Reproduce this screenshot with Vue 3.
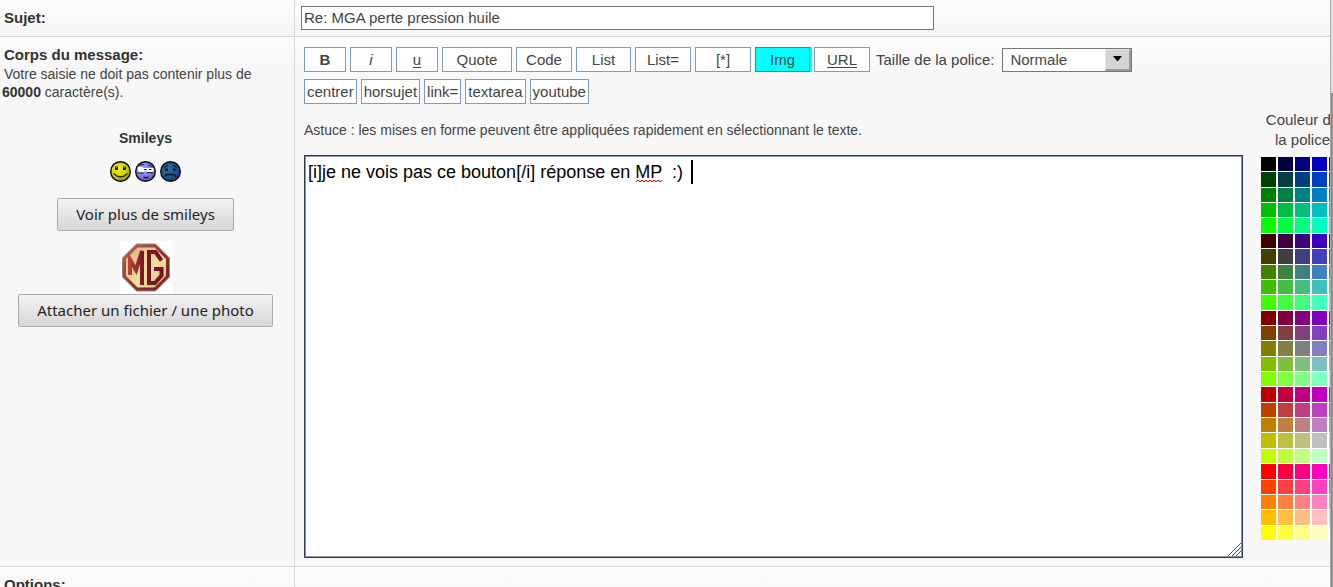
<template>
  <form class="post-form" @submit.prevent>
    <div class="form-rows">
      <!-- Sujet -->
      <div class="cell label-cell subject-label">
        <label class="row-title" for="subject">Sujet:</label>
      </div>
      <div class="cell subject-cell">
        <input id="subject" v-model="subject" class="subject-input" type="text" />
      </div>

      <!-- Corps du message -->
      <div class="cell label-cell body-label">
        <label class="row-title" for="message">Corps du message:</label>
        <p class="limit">
          <span class="limit-intro">Votre saisie ne doit pas contenir plus de</span>
          <b>60000</b> caractère(s).
        </p>

        <div class="tools">
          <h2 class="tools-title">Smileys</h2>
          <div class="smileys">
            <button
              v-for="smiley in smileys"
              :key="smiley.code"
              class="smiley"
              type="button"
              :aria-label="smiley.name"
              @click="insert(smiley.code)"
            >
              <svg viewBox="0 0 21 21" width="21" height="21">
                <defs>
                  <radialGradient :id="'face-' + smiley.name" cx="0.4" cy="0.35" r="0.7">
                    <stop offset="0" :stop-color="smiley.light" />
                    <stop offset="0.6" :stop-color="smiley.base" />
                    <stop offset="1" :stop-color="smiley.dark" />
                  </radialGradient>
                </defs>
                <circle cx="10.5" cy="10.5" r="9.8" :fill="`url(#face-${smiley.name})`" stroke="#0a0a12" stroke-width="1.4" />
                <g v-if="smiley.name === 'sourire'">
                  <path d="M5 5.5h3v3.500H5zM13 5.500h3v3.500h-3z" fill="#161600" />
                  <path d="M6 6h1v1H6zM14 6h1v1h-1z" fill="#8f8f20" />
                  <path d="M3.500 12.500l1.500 1C7 16.500 14 16.500 16 13.500l1.500-1" fill="none" stroke="#222000" stroke-width="1.3" />
                </g>
                <g v-else-if="smiley.name === 'cool'">
                  <path d="M3 4.500l6-1M13 4l5 1.500" stroke="#22224a" stroke-width="1" />
                  <path d="M2.500 6.500q3.500-1.500 6.500.5h9.500v4H12l-2-1.500-1 2H4.500L3 10z" fill="#fff" />
                  <path d="M9 8.500h2.500M14 8.500h2.500M12 11.500h6M3 12h6" stroke="#17172e" stroke-width="1.100" />
                  <path d="M8.500 16.500h5" stroke="#17172e" stroke-width="1.500" />
                </g>
                <g v-else>
                  <path d="M4 6.500l4-2M13 4.500l4 2" stroke="#07182c" stroke-width="1.200" />
                  <path d="M5.500 7.500h2.500v2.500H5.500zM13 7.500h2.500v2.500H13z" fill="#051326" />
                  <path d="M5 15.500l2-2h7l2 2" fill="none" stroke="#07182c" stroke-width="1.400" />
                </g>
              </svg>
            </button>
          </div>
          <button class="soft-button" type="button">Voir plus de smileys</button>
          <svg class="logo" viewBox="0 0 52 53" width="52" height="53" role="img" aria-label="MG">
            <defs>
              <linearGradient id="badge-red" x1="0" y1="0" x2="1" y2="1">
                <stop offset="0" stop-color="#c4665a" />
                <stop offset="0.5" stop-color="#8e3436" />
                <stop offset="1" stop-color="#742022" />
              </linearGradient>
              <linearGradient id="badge-cream" x1="0" y1="0" x2="1" y2="1">
                <stop offset="0" stop-color="#dcb57c" />
                <stop offset="0.6" stop-color="#f0dfa4" />
                <stop offset="1" stop-color="#d3b273" />
              </linearGradient>
              <linearGradient id="badge-mark" gradientUnits="userSpaceOnUse" x1="8" y1="0" x2="44" y2="0">
                <stop offset="0" stop-color="#c4453c" />
                <stop offset="0.4" stop-color="#7c1820" />
                <stop offset="1" stop-color="#74161e" />
              </linearGradient>
            </defs>
            <path d="M0 0h52v53H0z" fill="#fff" />
            <path d="M16.500 3h19L49.500 17v19L35.500 50h-19L2.500 36V17z" fill="url(#badge-red)" stroke="#a08078" stroke-width="1" />
            <path d="M17.500 6.500h17L46 18v17L34.500 46.500h-17L6 35V18z" fill="url(#badge-cream)" />
            <g fill="none" stroke="url(#badge-mark)" stroke-width="4">
              <path d="M10 34V18.500L16 29l6-19v34" />
              <path d="M41.500 19.500L35.500 11H29v31h6l6.500-7.500V28H34" />
            </g>
          </svg>
          <button class="soft-button" type="button">Attacher un fichier / une photo</button>
        </div>
      </div>

      <div class="cell editor-cell">
        <div class="toolbar">
          <button
            v-for="tag in tags"
            :key="tag.label"
            class="tag"
            :class="[tag.kind, { active: tag.label === 'Img' }]"
            type="button"
            @click="insert(tag.code)"
          >{{ tag.label }}</button>
          <label class="size-label" for="font-size">Taille de la police:</label>
          <span class="size-box">
            <select id="font-size" v-model="fontSize" class="size-select">
              <option>Très petite</option>
              <option>Petite</option>
              <option>Normale</option>
              <option>Grande</option>
              <option>Très grande</option>
            </select>
            <span class="size-arrow">
              <svg viewBox="0 0 9 6" width="9" height="6"><path d="M0 0h9L4.500 5.500z" fill="#000" /></svg>
            </span>
          </span>
        </div>
        <div class="toolbar extra">
          <button v-for="tag in extraTags" :key="tag" class="tag fit" type="button" @click="insert(`[${tag}]`)">{{ tag }}</button>
        </div>
        <p class="hint">Astuce : les mises en forme peuvent être appliquées rapidement en sélectionnant le texte.</p>

        <div class="writing">
          <div class="message-box">
            <textarea id="message" v-model="message" class="message" spellcheck="false"></textarea>
            <svg class="squiggle" viewBox="0 0 27 4" width="27" height="4">
              <path d="M0 3l2-2 2 2 2-2 2 2 2-2 2 2 2-2 2 2 2-2 2 2 2-2 2 2 2-2" fill="none" stroke="#f00" stroke-width="1" />
            </svg>
            <span class="caret"></span>
            <svg class="grip" viewBox="0 0 13 13" width="13" height="13">
              <path d="M0 13L13 0M4 13l9-9M8 13l5-5" stroke="#555" stroke-width="1" />
            </svg>
          </div>
          <div class="colours">
            <p class="colours-title">Couleur de la police</p>
            <div class="palette">
              <button
                v-for="colour in palette"
                :key="colour"
                class="swatch"
                type="button"
                :aria-label="colour"
                :style="{ backgroundColor: colour }"
                @click="insert(`[color=${colour}]`)"
              ></button>
            </div>
          </div>
        </div>
      </div>

      <!-- Options -->
      <div class="cell label-cell options-label">
        <span class="row-title">Options:</span>
      </div>
      <div class="cell options-cell"></div>
    </div>
    <div class="scroll-track"><div class="scroll-thumb"></div></div>
  </form>
</template>

<script setup>
import { ref } from 'vue';

const subject = ref('Re: MGA perte pression huile');
const message = ref('[i]je ne vois pas ce bouton[/i] réponse en MP  :) ');
const fontSize = ref('Normale');

const smileys = [
  { name: 'sourire', code: ':)', light: '#f0f020', base: '#d0d000', dark: '#858500' },
  { name: 'cool', code: '8)', light: '#9a9cf6', base: '#7b7de0', dark: '#5557a6' },
  { name: 'triste', code: ':(', light: '#2b6aa8', base: '#1f568f', dark: '#143c69' },
];

const tags = [
  { label: 'B', code: '[b][/b]', kind: 'short bold' },
  { label: 'i', code: '[i][/i]', kind: 'short italic' },
  { label: 'u', code: '[u][/u]', kind: 'short underline' },
  { label: 'Quote', code: '[quote][/quote]', kind: 'wide' },
  { label: 'Code', code: '[code][/code]', kind: '' },
  { label: 'List', code: '[list][/list]', kind: 'narrow' },
  { label: 'List=', code: '[list=][/list]', kind: '' },
  { label: '[*]', code: '[*]', kind: '' },
  { label: 'Img', code: '[img][/img]', kind: 'narrow' },
  { label: 'URL', code: '[url][/url]', kind: 'underline' },
];

const extraTags = ['centrer', 'horsujet', 'link=', 'textarea', 'youtube'];

// rouge par blocs de cinq lignes, vert par ligne, bleu par colonne
const levels = ['00', '40', '80', 'BF', 'FF'];
const palette = levels.flatMap((r) => levels.flatMap((g) => levels.map((b) => `#${r}${g}${b}`)));

const insert = (text) => {
  message.value += text;
};
</script>

<style>
body {
  background: #f7f7f7;
}
</style>

<style scoped>
.post-form {
  display: flex;
  height: 100vh;
  overflow: hidden;
  font-family: 'Liberation Sans', Arial, sans-serif;
  font-size: 15px;
  color: #444;
}

.post-form * {
  box-sizing: border-box;
}

button,
input,
select,
textarea {
  font: inherit;
  color: inherit;
  margin: 0;
}

p,
h2 {
  margin: 0;
}

.form-rows {
  flex: 1;
  min-width: 0;
  display: grid;
  grid-template-columns: 295px minmax(0, 1fr);
  grid-auto-rows: max-content;
  align-content: start;
  overflow: hidden;
}

.cell {
  border-bottom: 1px solid #d5d5d5;
  background: linear-gradient(#fdfdfd, #f7f7f7 30px);
}

.label-cell {
  border-right: 1px solid #d9d9d9;
  padding: 8px 7px 8px 4px;
}

.row-title {
  display: block;
  line-height: 20px;
  font-weight: bold;
  color: #333;
}

.subject-cell {
  padding: 6px;
}

.subject-input {
  display: block;
  width: 633px;
  max-width: 100%;
  height: 24px;
  padding: 0 2px 2px;
  border: 1px solid #777;
  background: #fff;
}

.limit {
  font-size: 14px;
  line-height: 18px;
  margin-left: -2px;
}

.limit-intro {
  display: block;
  padding-left: 2px;
}

.limit b {
  color: #333;
}

.tools {
  display: flex;
  flex-direction: column;
  align-items: center;
  padding-top: 28px;
}

.tools-title {
  font-size: 14px;
  line-height: 18px;
  color: #333;
}

.smileys {
  display: flex;
  gap: 4px;
  padding: 14px 0 16px;
}

.smiley {
  display: block;
  height: 21px;
  padding: 0;
  border: none;
  background: none;
  cursor: pointer;
}

.smiley svg,
.logo {
  display: block;
}

.soft-button {
  height: 33px;
  padding: 0 18px 2px;
  border: 1px solid #aaa;
  border-radius: 2px;
  background: linear-gradient(#f3f3f3, #d6d6d6);
  font-family: 'Noto Sans', 'Open Sans', sans-serif;
  color: #222;
  cursor: pointer;
}

.logo {
  margin-top: 10px;
}

.editor-cell {
  padding: 10px 0 8px 9px;
  overflow: hidden;
}

.toolbar {
  display: flex;
  flex-wrap: wrap;
  align-items: center;
  gap: 4px;
}

.extra {
  margin-top: 7px;
}

.tag {
  width: 56px;
  height: 25px;
  padding: 0;
  border: 1px solid #7f9db9;
  background: #fff;
  text-align: center;
  cursor: pointer;
}

.tag.short {
  width: 42px;
}

.tag.narrow {
  width: 55px;
}

.tag.wide {
  width: 70px;
}

.tag.fit {
  width: auto;
  padding: 0 2px;
}

.tag.bold {
  font-weight: bold;
}

.tag.italic {
  font-style: italic;
}

.tag.underline {
  text-decoration: underline;
  text-underline-offset: 2px;
}

.tag.active {
  background: #0ff;
  border-color: #2b8ca8;
  box-shadow: 2px 0 #0ff;
}

.size-label {
  margin-left: 2px;
}

.size-box {
  position: relative;
  width: 130px;
  margin-left: 4px;
}

.size-select {
  display: block;
  appearance: none;
  width: 100%;
  height: 24px;
  padding: 0 30px 0 7px;
  border: 1px solid #777;
  border-radius: 0;
  background: #fff;
}

.size-arrow {
  position: absolute;
  top: 1px;
  right: 1px;
  bottom: 1px;
  width: 26px;
  display: flex;
  align-items: center;
  justify-content: center;
  border: solid;
  border-width: 1px 2px 2px 1px;
  border-color: #e4e4e4 #999 #999 #e4e4e4;
  background: #d4d4d4;
  pointer-events: none;
}

.hint {
  margin-top: 17px;
  font-size: 14px;
  line-height: 18px;
}

.writing {
  display: flex;
  gap: 18px;
  margin-right: -14px;
}

.message-box {
  position: relative;
  flex: 1;
  min-width: 0;
  margin-top: 16px;
}

.message {
  display: block;
  width: 100%;
  height: 403px;
  padding: 4px 3px;
  border: 1px solid #2d3c50;
  box-shadow: inset 0 0 0 1px #8c96a4;
  background: #fff;
  font-size: 18px;
  line-height: 24px;
  color: #000;
  resize: none;
  outline: none;
}

.squiggle {
  position: absolute;
  left: 332px;
  top: 24px;
}

.caret {
  position: absolute;
  left: 387px;
  top: 5px;
  width: 2px;
  height: 24px;
  background: #000;
}

.grip {
  position: absolute;
  right: 2px;
  bottom: 2px;
}

.colours {
  width: 83px;
  margin-top: -29px;
}

.colours-title {
  text-align: center;
  line-height: 20px;
  color: #444;
}

.palette {
  display: grid;
  grid-template: repeat(25, 1fr) / repeat(5, 1fr);
  gap: 1px 2px;
  height: 383px;
  margin-top: 7px;
  background: #fff;
}

.swatch {
  min-width: 0;
  padding: 0;
  border: none;
  cursor: pointer;
}

.scroll-track {
  width: 3px;
  border-left: 1px solid #aaa;
  background: #dedede;
}

.scroll-thumb {
  height: 100%;
  margin-top: 93px;
  border-left: 1px solid #888;
  background: #999;
}
</style>
